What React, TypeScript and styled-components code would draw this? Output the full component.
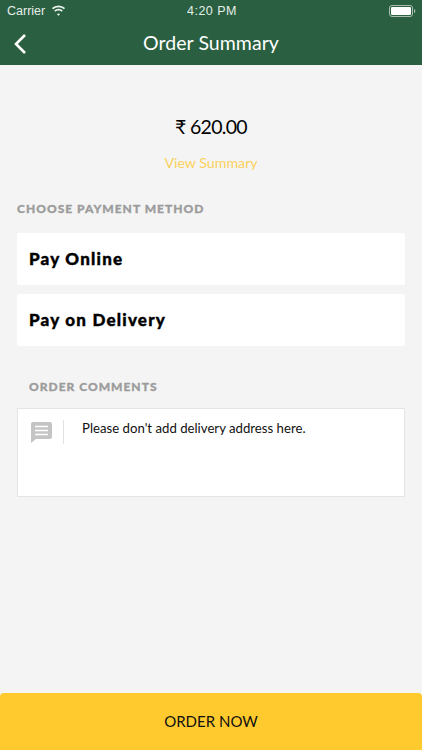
import React from "react";
import styled, { createGlobalStyle } from "styled-components";

const Global = createGlobalStyle`
  html, body { margin: 0; padding: 0; background: #f4f4f4; }
  body { font-family: Lato, "Noto Sans", sans-serif; }
`;

const Page = styled.div`
  width: 422px;
  height: 750px;
  display: flex;
  flex-direction: column;
  background: #f4f4f4;
  overflow: hidden;
`;

const Header = styled.header`
  height: 65px;
  background: #2a6041;
  color: #fff;
  flex: none;
  display: flex;
  flex-direction: column;
`;

const StatusBar = styled.div`
  height: 21px;
  padding: 0 6px 0 7px;
  display: grid;
  grid-template-columns: 1fr auto 1fr;
  align-items: center;
  font-family: "Liberation Sans", sans-serif;
  font-size: 12.5px;
  color: #e6eee9;
`;

const Carrier = styled.div`
  display: flex;
  align-items: center;
  gap: 6px;
`;

const Clock = styled.div`
  font-weight: 400;
  letter-spacing: 0.5px;
  padding-left: 1px;
`;

const Battery = styled.div`
  justify-self: end;
  display: flex;
`;

const NavBar = styled.div`
  flex: 1;
  display: flex;
  align-items: center;
  justify-content: center;
  position: relative;
  padding-bottom: 1px;
`;

const BackIcon = styled.svg`
  position: absolute;
  left: 13px;
  top: 12px;
`;

const Title = styled.h1`
  margin: 0;
  font-size: 19.5px;
  font-weight: 400;
  letter-spacing: 0.05px;
`;

const Main = styled.main`
  flex: 1;
  display: flex;
  flex-direction: column;
  padding: 0 17px;
`;

const Amount = styled.div`
  margin-top: 49px;
  height: 26px;
  line-height: 26px;
  text-align: center;
  font-size: 19.5px;
  letter-spacing: -0.7px;
  color: #000;
`;

const SummaryLink = styled.div`
  margin-top: 13px;
  height: 20px;
  line-height: 20px;
  text-align: center;
  font-size: 14.2px;
  color: #fbd15b;
`;

const SectionLabel = styled.div<{ $indent?: boolean }>`
  margin-top: ${(p) => (p.$indent ? 33 : 28)}px;
  margin-left: ${(p) => (p.$indent ? 12 : 0)}px;
  height: 16px;
  line-height: 16px;
  font-size: 12px;
  font-weight: 900;
  letter-spacing: 1px;
  color: #9c9c9c;
  -webkit-text-stroke: 0.3px #9c9c9c;
`;

const Methods = styled.div`
  margin-top: 16px;
  display: flex;
  flex-direction: column;
  gap: 9px;
`;

const Method = styled.div`
  height: 52px;
  padding: 0 12px 2px;
  display: flex;
  align-items: center;
  background: #fff;
  border-radius: 2px;
  font-size: 17px;
  font-weight: 900;
  letter-spacing: 1.2px;
  color: #000;
  -webkit-text-stroke: 0.4px #000;
  box-sizing: border-box;
`;

const CommentBox = styled.div`
  margin-top: 13px;
  height: 89px;
  box-sizing: border-box;
  background: #fff;
  border: 1px solid #e4e4e4;
  display: flex;
  align-items: flex-start;
  padding-top: 10px;
`;

const CommentIcon = styled.svg`
  margin: 3px 0 0 13px;
  flex: none;
`;

const Divider = styled.div`
  width: 1px;
  height: 24px;
  background: #e2e2e2;
  margin: 1px 0 0 11px;
  flex: none;
`;

const CommentText = styled.div`
  margin-left: 18px;
  font-size: 13.2px;
  line-height: 18px;
  color: #111;
`;

const OrderButton = styled.button`
  flex: none;
  height: 57px;
  width: 100%;
  border: 0;
  padding: 0 0 2px;
  background: #ffca2e;
  border-radius: 4px 4px 0 0;
  font-family: inherit;
  font-size: 15px;
  color: #111;
`;

export default function App() {
  return (
    <Page>
      <Global />
      <Header>
        <StatusBar>
          <Carrier>
            Carrier
            <svg width="15" height="11" viewBox="0 0 15 11">
              <path
                d="M7.5 2.2c2.1 0 4 .8 5.4 2.1l1.2-1.3A9.6 9.6 0 0 0 7.5.4 9.6 9.6 0 0 0 .9 3l1.2 1.3a7.9 7.9 0 0 1 5.4-2.1zm0 3.3c1.2 0 2.3.5 3.1 1.2l1.2-1.3a6.4 6.4 0 0 0-8.6 0l1.2 1.3c.8-.7 1.9-1.2 3.1-1.2zm0 3.1c-.6 0-1.1.2-1.5.6l1.5 1.6L9 9.2c-.4-.4-.9-.6-1.5-.6z"
                fill="#f2f6f3"
              />
            </svg>
          </Carrier>
          <Clock>4:20 PM</Clock>
          <Battery>
            <svg width="27" height="12" viewBox="0 0 27 12">
              <rect x="0.5" y="0.5" width="23" height="11" rx="2.5" fill="none" stroke="#a9bfb2" />
              <rect x="2" y="2" width="20" height="8" rx="1.2" fill="#fff" />
              <rect x="25" y="4.2" width="1.2" height="3.6" rx="0.6" fill="#a9bfb2" />
            </svg>
          </Battery>
        </StatusBar>
        <NavBar>
          <BackIcon width="14" height="22" viewBox="0 0 14 22">
            <path d="M12 2 3 11l9 9" fill="none" stroke="#fff" strokeWidth="2.6" />
          </BackIcon>
          <Title>Order Summary</Title>
        </NavBar>
      </Header>
      <Main>
        <Amount>₹ 620.00</Amount>
        <SummaryLink>View Summary</SummaryLink>
        <SectionLabel>CHOOSE PAYMENT METHOD</SectionLabel>
        <Methods>
          <Method>Pay Online</Method>
          <Method>Pay on Delivery</Method>
        </Methods>
        <SectionLabel $indent>ORDER COMMENTS</SectionLabel>
        <CommentBox>
          <CommentIcon width="21" height="21" viewBox="0 0 21 21">
            <path
              d="M2 0h17a2 2 0 0 1 2 2v13a2 2 0 0 1-2 2H5l-5 4V2a2 2 0 0 1 2-2z"
              fill="#c4c4c4"
            />
            <path d="M4 4.5h13M4 8.5h13M4 12.5h13" stroke="#fff" strokeWidth="1.6" />
          </CommentIcon>
          <Divider />
          <CommentText>Please don't add delivery address here.</CommentText>
        </CommentBox>
      </Main>
      <OrderButton>ORDER NOW</OrderButton>
    </Page>
  );
}
